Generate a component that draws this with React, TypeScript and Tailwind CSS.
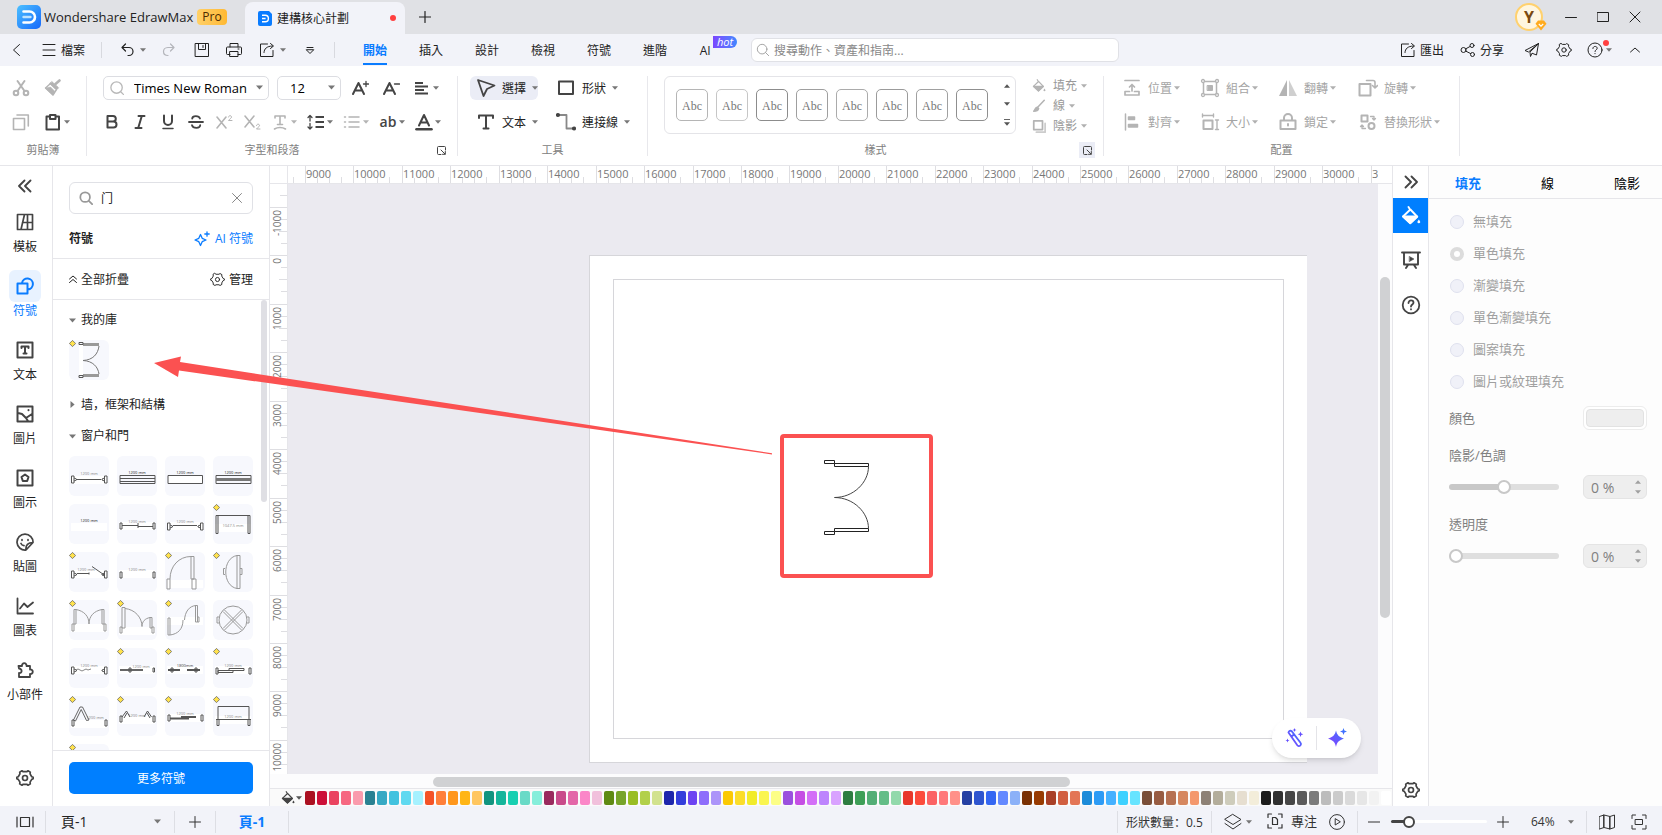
import React from "react";

type IconProps = { children: React.ReactNode; size?: string; box?: string; className?: string; sw?: number };

const Icon = ({ children, size = "size-4", box = "0 0 16 16", className = "", sw = 1 }: IconProps) => (
  <svg
    aria-hidden="true"
    viewBox={box}
    fill="none"
    stroke="currentColor"
    strokeWidth={sw}
    strokeLinecap="round"
    strokeLinejoin="round"
    className={`${size} shrink-0 ${className}`}
  >
    {children}
  </svg>
);

const Caret = ({ className = "text-[#777]", size = "h-1 w-1.5" }: { className?: string; size?: string }) => (
  <svg aria-hidden="true" viewBox="0 0 6 4" className={`${size} shrink-0 ${className}`}>
    <path d="M0 .3h6L3 3.800z" fill="currentColor" />
  </svg>
);

const GearPath = () => (
  <>
    <path d="M5.3 1.600 6.400 2.400h3.200l1.100-.8 2 1.200-.2 1.500 1.500 2.600 1.300.4v1.400l-1.300.5-1.500 2.500.2 1.500-2 1.200-1.100-.8H6.400l-1.100.8-2-1.200.2-1.500L2 9.200.7 8.700V7.300L2 6.900l1.500-2.600-.2-1.500z" />
    <circle cx="8" cy="8" r="2.200" />
  </>
);

const Bucket = () => (
  <>
    <path d="M6 .8l1.500 2.400M7.500 2.800 1.600 8.400l5.800 5.400 5.600-5.200z" />
    <path d="M1.800 8.400h11L7.400 13.600z" fill="currentColor" />
    <path d="M14.300 10.800c.8 1.200 1.100 1.700 1.100 2.200a1.200 1.200 0 0 1-2.300 0c0-.5.3-1 1.200-2.200z" fill="currentColor" stroke="none" />
  </>
);

const Logo = ({ className }: { className: string }) => (
  <svg aria-hidden="true" viewBox="0 0 24 24" className={`shrink-0 ${className}`}>
    <defs>
      <linearGradient id="logo-fill" x1="0" y1="0" x2="1" y2="1">
        <stop offset="0" stopColor="#4cc0ff" />
        <stop offset="1" stopColor="#1668fb" />
      </linearGradient>
    </defs>
    <rect width="24" height="24" rx="5" fill="url(#logo-fill)" />
    <path d="M6.500 6.500h6a5.500 5.500 0 0 1 0 11h-6" fill="none" stroke="#fff" strokeWidth="2.600" strokeLinecap="round" />
    <path d="M6.500 12h7" stroke="#bfe4ff" strokeWidth="2.400" strokeLinecap="round" />
  </svg>
);

function TitleBar() {
  return (
    <header className="flex h-[34px] shrink-0 items-center bg-[#e0e1e5] pl-[17px]">
      <Logo className="size-6" />
      <span className="ml-[3px] w-[150px] whitespace-nowrap pt-px text-[13px] text-[#222]">Wondershare EdrawMax</span>
      <span className="ml-[3px] flex h-4 w-[30px] items-center justify-center rounded-sm bg-gradient-to-r from-[#ffd066] to-[#ffb931] text-xs text-[#4b2a00]">
        Pro
      </span>
      <div className="ml-[18px] flex h-8 w-40 items-center self-end rounded-t-lg bg-[#f2f3f9] pl-[13px] pr-[9px]">
        <svg aria-hidden="true" viewBox="0 0 14 15" className="h-[15px] w-[14px]">
          <path d="M2 0h9l3 3v10a2 2 0 0 1-2 2H2a2 2 0 0 1-2-2V2a2 2 0 0 1 2-2z" fill="#0a7cff" />
          <path d="M4 4.300h3.200a3.200 3.200 0 0 1 0 6.400H4M4 7.500h3.600" fill="none" stroke="#fff" strokeWidth="1.400" />
        </svg>
        <span className="ml-[5px] pt-px text-xs text-[#222]">建構核心計劃</span>
        <span className="ml-auto size-1.5 rounded-full bg-[#ff4040]" />
      </div>
      <button aria-label="新增標籤" className="ml-[14px] text-[#222]">
        <Icon size="size-3" box="0 0 12 12" sw={1.2}><path d="M6 .5v11M.5 6h11" /></Icon>
      </button>
      <div className="ml-auto flex items-center pr-[21px] text-[#222]">
        <div className="relative flex size-7 items-center justify-center rounded-full border-2 border-[#ffd16e] bg-[#fff6df] text-base font-bold text-[#7a4a10]">
          Y
          <svg aria-hidden="true" viewBox="0 0 12 11" className="absolute -right-1.5 -bottom-0.5 h-[11px] w-3">
            <path d="M3 .5h6l2.500 3.200L6 10.500.5 3.700z" fill="#ffab1f" />
            <path d="m3.800 4 2.200 2.200L8.200 4" fill="none" stroke="#fff" strokeWidth="1.200" />
          </svg>
        </div>
        <button aria-label="最小化" className="ml-[22px]"><Icon size="size-3" box="0 0 12 12"><path d="M.5 6.500h11" /></Icon></button>
        <button aria-label="最大化" className="ml-5"><Icon size="size-3" box="0 0 12 12"><path d="M.5 1.500h11v9H.5z" /></Icon></button>
        <button aria-label="關閉" className="ml-5"><Icon size="size-3" box="0 0 12 12"><path d="m1 1 10 10M11 1 1 11" /></Icon></button>
      </div>
    </header>
  );
}

const ExportIcon = () => (
  <Icon><path d="M8.500 2H1.500v12.500h12.500V8.500M5 10.500c.3-3.800 2.500-6.300 8.500-6.500M11.500 1.500 14.500 4l-3 2.500" /></Icon>
);

function MenuBar() {
  return (
    <nav className="flex h-8 shrink-0 items-center bg-[#f2f3f9] text-xs text-[#222]">
      <button aria-label="返回" className="flex w-[34px] justify-center">
        <Icon size="size-3" box="0 0 12 12"><path d="M8.500.5 2.500 6l6 5.500" /></Icon>
      </button>
      <button className="ml-2 flex items-center gap-[5px]">
        <Icon size="size-[14px]" box="0 0 14 14"><path d="M1 1.500h12M1 7h12M1 12.500h12" /></Icon>
        <span className="pt-0.5">檔案</span>
      </button>
      <span className="ml-4 h-4 w-px bg-[#d8d9df]" />
      <button aria-label="復原" className="ml-[17px] flex items-center gap-[5px]">
        <Icon sw={1.200}><path d="M6.500 2 3 5.500 6.500 9M3.200 5.500H10a4 4 0 0 1 0 8H9" /></Icon>
        <Caret />
      </button>
      <button aria-label="重做" className="ml-[15px] text-[#b4b5bb]">
        <Icon sw={1.200}><path d="M9.500 2 13 5.500 9.500 9M12.800 5.500H7C3.500 5.500 2.500 8 2.500 9.500s1 4 4.500 4" /></Icon>
      </button>
      <button aria-label="儲存" className="ml-[17px]">
        <Icon><path d="M1.500 1.500h13v13h-13zM4.500 1.500v6h7v-6M9 3.500v2" /></Icon>
      </button>
      <button aria-label="列印" className="ml-4">
        <Icon><path d="M4 5V1.500h8V5M4 12.500H1.500a1 1 0 0 1-1-1V6a1 1 0 0 1 1-1h13a1 1 0 0 1 1 1v5.500a1 1 0 0 1-1 1H12M4 9.500h8v5H4zM12 7h1" /></Icon>
      </button>
      <button aria-label="匯出檔案" className="ml-[17px] flex items-center gap-[5px]"><ExportIcon /><Caret /></button>
      <button aria-label="更多" className="ml-[19px]">
        <Icon size="size-[10px]" box="0 0 10 10"><path d="M2 2.500h6M1.500 5 5 8.500 8.500 5z" /></Icon>
      </button>
      <span className="ml-[19px] h-4 w-px bg-[#d8d9df]" />
      <div className="ml-7 flex h-full items-center gap-8 whitespace-nowrap pt-0.5">
        <button className="relative h-full font-bold text-[#0a7cff]">
          開始<span className="absolute inset-x-0 bottom-px h-0.5 bg-[#0a7cff]" />
        </button>
        {["插入", "設計", "檢視", "符號", "進階"].map((t) => <button key={t}>{t}</button>)}
        <button className="relative w-3">
          AI
          <span className="absolute -top-[7px] left-[14px] flex h-3 w-6 items-center justify-center rounded-r-full rounded-tl-md bg-gradient-to-r from-[#7a45ff] to-[#3d86ff] text-[11px] italic text-white">hot</span>
        </button>
      </div>
      <label className="ml-10 flex h-6 max-w-[368px] flex-1 items-center gap-1 rounded-md border border-[#e0e1e6] bg-white px-1">
        <Icon size="size-[14px]" className="text-[#999]"><circle cx="7" cy="7" r="5.500" /><path d="m11 11 3.500 3.500" /></Icon>
        <input aria-label="搜尋" placeholder="搜尋動作、資產和指南..." className="w-full bg-transparent pt-0.5 text-xs outline-none placeholder:text-[#888]" />
      </label>
      <div className="ml-auto flex items-center pr-[22px]">
        <button className="flex items-center gap-1"><ExportIcon /><span className="pt-0.5">匯出</span></button>
        <button className="ml-4 flex items-center gap-1">
          <Icon><circle cx="3.500" cy="8" r="2.500" /><circle cx="12" cy="3.500" r="2" /><circle cx="12.500" cy="12.500" r="2" /><path d="M5.800 6.800 10.200 4.400M5.900 9.200l4.800 2.400" /></Icon>
          <span className="pt-0.5">分享</span>
        </button>
        <button aria-label="傳送" className="ml-5">
          <Icon><path d="M14.500 1.500 1 8.500l3.500 1.500L14.500 1.500 12.500 13 8 11.200 6.500 14.500 6 10.500z" /></Icon>
        </button>
        <button aria-label="設定" className="ml-4"><Icon><GearPath /></Icon></button>
        <button aria-label="說明" className="relative ml-[15px] flex items-center gap-[3px]">
          <Icon><circle cx="8" cy="8" r="7" /><path d="M5.900 6.500c0-3 4.300-2.600 4.300-.2C10.200 7.800 8 7.700 8 9.500M8 11.500v.2" /></Icon>
          <Caret />
          <span className="absolute -top-0.5 left-4 size-1.5 rounded-full bg-[#ff4040]" />
        </button>
        <button aria-label="收合" className="ml-[18px]">
          <Icon size="size-[10px]" box="0 0 10 10"><path d="m.5 7 4.500-4L9.500 7" /></Icon>
        </button>
      </div>
    </nav>
  );
}

const Group = ({ title, width, launcher, children }: { title: string; width: string; launcher?: string; children: React.ReactNode }) => (
  <>
    <section aria-label={title} className={`${width} shrink-0`}>
      <div className="h-[58px]">{children}</div>
      <div className="relative mt-2 flex h-4 items-center justify-center text-[11px] text-[#808080]">
        {title}
        {launcher && (
          <button aria-label={`${title}選項`} className={`absolute right-2 top-0 flex size-4 items-center justify-center text-[#444] ${launcher}`}>
            <Icon size="size-[9px]" box="0 0 9 9"><path d="M4 8.500H1.500a1 1 0 0 1-1-1v-6a1 1 0 0 1 1-1h6a1 1 0 0 1 1 1V4M4 4l4 4M8.300 5.500v2.800H5.500" /></Icon>
          </button>
        )}
      </div>
    </section>
    <span className="h-20 w-px shrink-0 bg-[#e8e8ec]" />
  </>
);

const ToolButton = ({ icon, label, active = false }: { icon: React.ReactNode; label: string; active?: boolean }) => (
  <button className={`flex h-6 items-center whitespace-nowrap rounded-md text-xs text-[#222] ${active ? "bg-[#ebedf6]" : ""}`}>
    <span className="flex w-8 justify-center text-[#444]">{icon}</span>
    <span className="pt-0.5">{label}</span>
    <Caret className="ml-1.5 text-[#777]" />
  </button>
);

const ArrangeButton = ({ icon, label }: { icon: React.ReactNode; label: string }) => (
  <button className="flex h-6 items-center gap-1.5 whitespace-nowrap text-xs">
    <Icon size="size-5" box="0 0 20 20" sw={2} className="text-[#b4b4b4]">{icon}</Icon>
    <span className="flex items-center gap-0.5"><span className="pt-0.5">{label}</span><Caret className="text-[#b0b0b0]" /></span>
  </button>
);

const Cell = ({ label, caret, children, muted }: { label: string; caret?: boolean; muted?: boolean; children: React.ReactNode }) => (
  <button aria-label={label} className={`flex h-6 items-center justify-between ${caret ? "w-[26px]" : "w-[18px]"} ${muted ? "text-[#b4b4b4]" : "text-[#444]"}`}>
    <Icon size="size-[18px]" box="0 0 18 18" sw={2}>{children}</Icon>
    {caret && <Caret className={muted ? "text-[#b4b4b4]" : "text-[#777]"} />}
  </button>
);

const GlyphA = () => <path d="M2 15 7.500 4l5.500 11M4 11.500h7" />;

function Ribbon() {
  return (
    <div className="flex shrink-0 overflow-hidden border-b border-[#e6e6ea] bg-white pt-[10px] pb-[7px] text-[#333]">
      <Group title="剪貼簿" width="w-[86px]">
        <div className="grid grid-cols-[32px_auto] gap-y-[10px] pl-3">
          <Cell label="剪下" muted><circle cx="4" cy="14" r="2.300" /><circle cx="14" cy="14" r="2.300" /><path d="m5.500 12 7-10M12.500 12l-7-10" /></Cell>
          <Cell label="複製格式" muted><path d="M11.500 5 15.500 1.500" strokeWidth="2.600" /><path d="M8 2.800l6.500 6-2 2-6.500-6z" fill="currentColor" strokeWidth="1" /><path d="M6.500 4.500l6 6L9 16 1.500 9z" strokeWidth="1.400" /><path d="M1.500 9l5-1 4.500 4.500L9 16z" fill="currentColor" strokeWidth="0.500" /></Cell>
          <Cell label="複製" muted><path d="M1.500 5.500h11v11h-11z" strokeWidth="1.600" /><path d="M5 2h11.300v11" strokeWidth="1.600" /></Cell>
          <Cell label="貼上" caret><path d="M5.500 3.500H2.500v13h12.500v-13h-3M6 2h5.500v4H6z" /></Cell>
        </div>
      </Group>

      <Group title="字型和段落" width="w-[370px]" launcher="bg-white">
        <div className="flex items-center pl-4">
          <label className="relative flex h-6 w-[166px] items-center rounded-[5px] border border-[#dcdde2] pl-1.5">
            <Icon size="size-[14px]" className="text-[#b8b8b8]" sw={1.500}><circle cx="7.500" cy="7.500" r="6.500" /><path d="m12.500 12.500 2.800 2.800" /></Icon>
            <select aria-label="字型" className="w-full appearance-none bg-transparent pl-[10px] pt-px text-[13px] text-black outline-none">
              <option>Times New Roman</option>
            </select>
            <span className="pointer-events-none absolute right-[5px] top-2 flex"><Caret size="h-[5px] w-[7px]" /></span>
          </label>
          <label className="relative ml-2 flex h-6 w-16 items-center rounded-[5px] border border-[#dcdde2]">
            <select aria-label="字型大小" className="w-full appearance-none bg-transparent pl-3 pt-px text-[13px] text-black outline-none">
              <option>12</option>
            </select>
            <span className="pointer-events-none absolute right-[5px] top-2 flex"><Caret size="h-[5px] w-[7px]" /></span>
          </label>
          <div className="ml-[10px] flex items-center gap-[13px]">
            <Cell label="放大字型"><GlyphA /><path d="M12.500 5h5M15 2.500v5" strokeWidth="1.300" /></Cell>
            <Cell label="縮小字型"><GlyphA /><path d="M12.500 5h5" strokeWidth="1.300" /></Cell>
            <Cell label="對齊文字" caret><path d="M2 4h8M2 7.500h13M2 11h9M2 14.500h13" strokeLinecap="butt" /></Cell>
          </div>
        </div>
        <div className="mt-[10px] flex items-center gap-[10px] pl-4">
          <Cell label="粗體"><path d="M4.500 3h5.500a2.800 2.800 0 0 1 0 5.600H4.500zM4.500 8.600h6a3 3 0 0 1 0 6h-6z" /></Cell>
          <Cell label="斜體"><path d="M7.500 3h6M4.500 15h6M10.800 3 7.200 15" /></Cell>
          <Cell label="底線"><path d="M5 2.500v5.500a4 4 0 0 0 8 0V2.500" /><path d="M4 15.500h10" strokeWidth="1.500" /></Cell>
          <Cell label="刪除線"><path d="M13 5.500C12 2.500 5.500 2.300 5.200 5.700M2 9h14M5 12.200c1 3.500 8 3.500 8.200 0" strokeWidth="1.800" /></Cell>
          <Cell label="上標" muted><path d="m2 4 9 11M11 4 2 15" strokeWidth="1.600" /><path d="M13.500 4c.2-2 3.200-1.700 3 .2-.2 1.200-2 1.800-3 3.300h3.500" strokeWidth="1" /></Cell>
          <Cell label="下標" muted><path d="m2 3 9 11M11 3 2 14" strokeWidth="1.600" /><path d="M13.500 12.500c.2-2 3.200-1.700 3 .2-.2 1.200-2 1.800-3 3.300H17" strokeWidth="1" /></Cell>
          <Cell label="文字效果" caret muted><path d="M4 5V3h10v2M9 3v8.500M6.500 11.500h5M3.500 16c3-2 8-2 11 0" strokeWidth="1.600" /></Cell>
          <Cell label="行距" caret><path d="M8.500 4H17M8.500 9H17M8.500 14H17" strokeLinecap="butt" /><path d="M3 3v5M3 10.500v5M1 4.500l2-2 2 2M1 14l2 2 2-2" strokeWidth="1.300" /></Cell>
          <Cell label="清單" caret muted><path d="M6 4h10M6 9h10M6 14h10M1.500 4h1M1.500 9h1M1.500 14h1" strokeWidth="1.500" /></Cell>
          <button aria-label="文字大小寫" className="flex h-6 w-[26px] items-center justify-between text-[#444]">
            <span className="w-[18px] text-sm font-semibold">ab</span><Caret />
          </button>
          <Cell label="字型顏色" caret><path d="M4 12.500 9 2l5 10.500M6 9.500h6" /><path d="M1.500 16.300h15" strokeWidth="2.600" /></Cell>
        </div>
      </Group>

      <Group title="工具" width="w-[189px]">
        <div className="grid grid-cols-[80px_auto] justify-items-start gap-y-[10px] pl-3">
          <ToolButton active label="選擇" icon={<Icon size="size-5" box="0 0 20 20" sw={1.800}><path d="M2 2 18.500 7.500l-7.500 3.500-3.500 7z" /></Icon>} />
          <ToolButton label="形狀" icon={<Icon size="size-4" sw={2}><path d="M1 1.500h14v12.500H1z" /></Icon>} />
          <ToolButton label="文本" icon={<Icon size="size-4" sw={2}><path d="M1 4V1.500h14V4M8 1.500v13M5.500 14.500h5" /></Icon>} />
          <ToolButton label="連接線" icon={<Icon size="size-5" box="0 0 20 20" sw={1.800}><path d="M4 3h6.500v13.500H17" stroke="#888" /><circle cx="2" cy="3" r="1.200" fill="currentColor" /><circle cx="18" cy="16.500" r="1.200" fill="currentColor" /></Icon>} />
        </div>
      </Group>

      <Group title="樣式" width="w-[455px]" launcher="bg-[#ebedf6]">
        <div className="flex pl-4">
          <div className="flex h-[58px] w-[352px] items-center rounded-md border border-[#e4e4e8] pl-[11px]">
            <div className="flex gap-2">
              {["#b5b5b5", "#c6c6c6", "#8c8c8c", "#9f9f9f", "#ababab", "#9b9b9b", "#a0a0a0", "#8f8f8f"].map((c) => (
                <button key={c} style={{ borderColor: c }} className="size-8 rounded-[5px] border bg-white pt-0.5 font-['Liberation_Serif',serif] text-xs text-[#777]">
                  Abc
                </button>
              ))}
            </div>
            <div className="ml-4 flex h-full flex-col items-center justify-between py-[7px] text-[#666]">
              <button aria-label="上一列" className="flex rotate-180"><Caret className="text-[#555]" /></button>
              <button aria-label="下一列" className="flex"><Caret className="text-[#555]" /></button>
              <button aria-label="展開" className="flex border-t border-[#666] pt-0.5"><Caret className="text-[#555]" /></button>
            </div>
          </div>
          <div className="ml-4 flex flex-col text-xs text-[#999]">
            {[
              ["填充", <Bucket key="f" />],
              ["線", <path key="l" d="M14 1.500 6.500 9.500M6 9.500c-2 0-2 2-4 4.500 3 0 5-1 5.500-3z" fill="currentColor" strokeWidth="1.800" />],
              ["陰影", <React.Fragment key="s"><path d="M5 15h10V5" stroke="#ccc" strokeWidth="2" /><path d="M2 2h10v10H2z" strokeWidth="2" /></React.Fragment>],
            ].map(([label, icon]) => (
              <button key={label as string} className="flex h-5 items-center">
                <span className="flex w-[21px]"><Icon size="size-[14px]" className="text-[#b4b4b4]" sw={1.4}>{icon}</Icon></span>
                {label}
                <Caret className="ml-1 text-[#b0b0b0]" />
              </button>
            ))}
          </div>
        </div>
      </Group>

      <Group title="配置" width="w-[355px]">
        <div className="grid grid-cols-[78px_78px_80px_auto] gap-y-[10px] pl-[18px] text-[#a4a4a4]">
          <ArrangeButton label="位置" icon={<path d="M3 2.500h14M3 17v-3.500h4.500M12.500 13.500H17V17H3M10 13V6.500M7.500 9 10 6.500 12.500 9" strokeWidth="1.700" />} />
          <ArrangeButton label="組合" icon={<><path d="M3.500 3.500h13v13h-13z" strokeWidth="1.500" /><path d="M7.500 7.500h5v5h-5z" fill="currentColor" strokeWidth="1" /><circle cx="3" cy="3" r="1.500" fill="#fff" strokeWidth="1.300" /><circle cx="17" cy="3" r="1.500" fill="#fff" strokeWidth="1.300" /><circle cx="3" cy="17" r="1.500" fill="#fff" strokeWidth="1.300" /><circle cx="17" cy="17" r="1.500" fill="#fff" strokeWidth="1.300" /></>} />
          <ArrangeButton label="翻轉" icon={<><path d="M9 2V18H1z" fill="currentColor" stroke="none" /><path d="M11 2V18h8z" fill="#cfcfcf" stroke="none" /></>} />
          <ArrangeButton label="旋轉" icon={<><path d="M1.500 6h11v11.500h-11z" /><path d="M8.500 2.500h6.500a2 2 0 0 1 2 2V9M14.500 7.500 17 10l2.500-2.500" strokeWidth="1.600" /></>} />
          <ArrangeButton label="對齊" icon={<><path d="M3.500 2v16" strokeWidth="1.500" /><path d="M6.500 5h6v2.500h-6zM6.500 12.500h9V15h-9z" fill="currentColor" strokeWidth="1.500" /></>} />
          <ArrangeButton label="大小" icon={<><path d="M3.500 8.500h9V17h-9z" /><path d="M2.500 3.500h11M2.500 2v3M13.500 2v3M17 8v9.500M15.500 8h3M15.500 17.500h3" strokeWidth="1.400" /></>} />
          <ArrangeButton label="鎖定" icon={<><path d="M2.500 8.500h15V17h-15zM6 8V6a4 4 0 0 1 8 0v2" /><path d="M10 12v1.500" /></>} />
          <ArrangeButton label="替換形狀" icon={<><path d="M3.500 3.500h6v6h-6z" /><circle cx="13.500" cy="14" r="3" /><path d="M12.500 4.500H16V8M14.500 6.500 16 8l1.500-1.500M7.500 16.500H4V13M2.500 14.500 4 13l1.500 1.500" strokeWidth="1.300" /></>} />
        </div>
      </Group>
    </div>
  );
}

const NAV: { label: string; icon: React.ReactNode; active?: boolean }[] = [
  { label: "模板", icon: <path d="M1.500 1.500h15v15h-15zM8.500 1.500 5 16.500M11.500 1.500v15M6.500 9.500H16" strokeWidth="1.700" /> },
  { label: "符號", active: true, icon: <path d="M1.500 6.500h10v10h-10zM6 6a5.500 5.500 0 1 1 5.800 6.500" /> },
  { label: "文本", icon: <path d="M1.500 1.500h15v15h-15zM5.500 7V5.500h7V7M9 5.500v7M7.500 12.500h3" /> },
  { label: "圖片", icon: <path d="M1.500 1.500h15v15h-15zM2 8l4 1 4 4 6-4M10 13l2 3M12.500 5v.2" /> },
  { label: "圖示", icon: <path d="M1.500 1.500h15v15h-15zM9 5.500 12.500 8l-1.300 4H6.800L5.500 8z" /> },
  { label: "貼圖", icon: <path d="M10 17A8 8 0 1 1 17 9.500M17 9.500 10 17c-.5-5 2-7.500 7-7.500zM6 6.500v.8M12 6.500v.8M5 10.500c.6 1.500 1.500 2 3 2.200" strokeWidth="1.700" /> },
  { label: "圖表", icon: <path d="M1.500 1.500v15H17M4 11.500l4-5 3.500 3.500L17 5.500" strokeWidth="1.800" /> },
  { label: "小部件", icon: <path d="M2.500 5H6a2.300 2.300 0 1 1 4.500 0H14v3.500a2.300 2.300 0 1 1 0 4.500v3H3v-4c3.500.5 3.500-4.500 0-4.500z" strokeWidth="1.800" /> },
];

function NavRail() {
  return (
    <aside className="flex w-[53px] shrink-0 flex-col items-center border-r border-[#e6e6ea] bg-white pr-0.5 text-[#444]">
      <button aria-label="收合面板" className="mt-[13px] mb-[13px]">
        <Icon size="size-[14px]" box="0 0 14 14" sw={1.800}><path d="M6.500 1.500 1 7l5.500 5.500M12.500 1.500 7 7l5.500 5.500" /></Icon>
      </button>
      {NAV.map((n) => (
        <button key={n.label} className={`mb-2 flex h-14 flex-col items-center ${n.active ? "text-[#0a7cff]" : ""}`}>
          <span className={`flex size-8 items-center justify-center rounded-md ${n.active ? "bg-[#e8f2ff]" : ""}`}>
            <Icon size="size-[18px]" box="0 0 18 18" sw={2}>{n.icon}</Icon>
          </span>
          <span className={`mt-px text-xs ${n.active ? "" : "text-[#222]"}`}>{n.label}</span>
        </button>
      ))}
      <button aria-label="設定" className="mt-auto mb-[19px]"><Icon size="size-[18px]" sw={1.500}><GearPath /></Icon></button>
    </aside>
  );
}

const Label = ({ y, x = 20, text = "1200 mm", fill = "#888" }: { y: number; x?: number; text?: string; fill?: string }) => (
  <text x={x} y={y} fontSize="4" fill={fill} stroke="none" textAnchor="middle">{text}</text>
);
const Strip = ({ y }: { y: number }) => <rect x="2" y={y} width="36" height="8" fill="#fff" stroke="none" />;
const Ends = ({ y }: { y: number }) => (
  <path d={`M2.500 ${y - 3.5}h2.500v7H2.500zM5 ${y - 1.5}l2.500 1v1L5 ${y + 1.5}M35.500 ${y - 3.5}H38v7h-2.500zM35.500 ${y - 1.5}l-2.500 1v1l2.500 1`} />
);
const Feet = ({ y }: { y: number }) => <path d={`M3 ${y}h2v6H3zM36 ${y}h2v6h-2z`} />;

const SYMBOLS: { name: string; marked?: boolean; soft?: boolean; art: React.ReactNode }[] = [
  { name: "窗", art: <><Strip y={20} /><Label y={19} /><Ends y={23.5} /><path d="M8 23.500h24" /></> },
  { name: "雙層窗", art: <><Label y={18} fill="#222" /><path d="M3 19.500h35v8H3zM3 22.500h35M3 25.500h35" /></> },
  { name: "開口", art: <><Label y={18} fill="#222" /><path d="M3 19.500h34.500v8H3z" fill="#fff" /></> },
  { name: "滑窗", art: <><Label y={18} fill="#222" /><path d="M3 19.500h35v8H3z" /><path d="M3 23.500h35" strokeWidth="3" stroke="#777" /></> },
  { name: "牆洞", art: <><Strip y={19} /><Label y={18} fill="#222" /></> },
  { name: "推窗", art: <><Strip y={18} /><Label y={19} /><Feet y={19} /><path d="M5 21.500h16M21 22.500h15M21 19v5" /></> },
  { name: "平窗", art: <><Strip y={18} /><Label y={19} /><Ends y={22.5} /><path d="M8 21.500h24" /></> },
  { name: "凸窗", marked: true, art: <><Strip y={20} /><path d="M3 11.500h34M3 11.500v18h2v-18M35 11.500v18h2v-18" /><Label y={23} text="1047.5 mm" /></> },
  { name: "開啟窗", marked: true, art: <><Strip y={18} /><Label y={19} x={17} /><Ends y={22.5} /><path d="M8 21.500h12M20 20.500v2M23 14.500l13 9" /></> },
  { name: "門洞", art: <><Strip y={18} /><Label y={19} /><Feet y={20} /></> },
  { name: "單門", marked: true, soft: true, art: <><Strip y={28} /><path d="M5 27C5 14 14 4.500 26 4.500M26 4.500h3V27h-3zM2 27h3v10H2zM27 27h4v10h-4z" /></> },
  { name: "半圓門", marked: true, soft: true, art: <path d="M24 3.500h3v33h-3zM24 3.500C9 6 9 34 24 36.500M12 16.500h-1.500v6H12M27 16.500h2v6h-2" /> },
  { name: "雙門", marked: true, soft: true, art: <><Strip y={24} /><path d="M7 9.500C15 11 20 16 20 24 20 16 25 11 33 9.500M5 9.500h2V24H5zM33 9.500h2V24h-2zM3 24h2v7H3zM35 24h2v7h-2z" /></> },
  { name: "子母門", marked: true, soft: true, art: <><Strip y={27} /><path d="M8 8.500c10 1 17 9 17 18 0-5 3-8 8-9M5 7.500h3V28H5zM33 17.500h2V28h-2zM3 27h2v6H3zM35 27h2v6h-2z" /></> },
  { name: "雙向門", marked: true, soft: true, art: <><Strip y={17} /><path d="M31 5.500C24 6 20 12 19.500 20M18 20C18 29 13 34 5 35M30.500 5.500h2V22h-2zM3 18h2v17H3zM32.500 17h1.500v5h-1.500z" /></> },
  { name: "旋轉門", soft: true, art: <path d="M20 6a14 14 0 1 1 0 28 14 14 0 0 1 0-28zM10 11.500 28.500 30M11.500 10 30 28.500M30 11.500 11.500 30M28.500 10 10 28.500M6 17H4v6h2M34 17h2v6h-2" /> },
  { name: "折疊門", art: <><Strip y={18} /><Label y={19} /><Ends y={22.5} /><path d="M7 22q2-2 4 0t4 0 4 0l3-1" stroke="#888" /></> },
  { name: "滑門", marked: true, art: <><Strip y={18} /><Label y={20} x={24} /><path d="M3 22h23" strokeWidth="1.800" /><path d="M12 20h2v4h-2zM36 20h1.500v4H36z" /></> },
  { name: "雙滑門", marked: true, art: <><Strip y={18} /><Label y={19} text="1800mm" fill="#444" /><path d="M3 22h12M22 22h13" strokeWidth="1.800" /><path d="M6 20h2v4H6zM30 20h2v4h-2z" /></> },
  { name: "移門", marked: true, art: <><Strip y={18} /><Label y={19} /><Feet y={20} /><path d="M5 22.500h15v2H5zM16 20.500h15v2H16z" /></> },
  { name: "折門", marked: true, art: <><Strip y={24} /><Label y={23} x={26} /><Feet y={24} /><path d="M4.500 24 11 11h2.500L20 24M6.500 25 12.200 13.500 17.500 24.500M4.500 24l2 1M17.500 24.500 20 24" strokeWidth="0.900" /></> },
  { name: "雙折門", marked: true, art: <><Strip y={20} /><Label y={21} /><Feet y={20} /><path d="M5 21 9.500 15 13 21M7 22l3-5M27 21l3.500-6 4 6M30 17l3 5" /></> },
  { name: "口袋門", marked: true, art: <><Strip y={18} /><Label y={19} /><Feet y={19} /><path d="M5 22.500h19M16 21h15" strokeWidth="1.800" /></> },
  { name: "捲門", marked: true, art: <><Strip y={20} /><path d="M5 10.500h31V23M5 10.500V23M3 23.500h35M4 23.500h2v6H4zM35 23.500h2v6h-2z" /><Label y={22} /></> },
];

const Marker = () => (
  <svg aria-hidden="true" viewBox="0 0 7 7" className="absolute left-0 top-0 size-[7px]">
    <path d="M3.500.4 6.600 3.500 3.500 6.600.4 3.500z" fill="#ffe24d" stroke="#555" strokeWidth=".7" />
  </svg>
);

function SymbolPanel() {
  return (
    <aside className="flex w-[217px] shrink-0 flex-col border-r border-[#e6e6ea] bg-white text-xs text-[#222]">
      <div className="border-b border-[#e6e6ea] px-4 pt-4">
        <label className="flex h-8 items-center rounded-md border border-[#e0e1e6] px-[9px]">
          <Icon size="size-[14px]" className="text-[#999]" sw={2}><circle cx="7" cy="7" r="5.500" /><path d="m11.200 11.200 3.800 3.800" /></Icon>
          <input aria-label="搜尋符號" defaultValue="门" className="ml-2 w-full bg-transparent pt-0.5 outline-none" />
          <button aria-label="清除" className="text-[#888]"><Icon size="size-3" box="0 0 12 12"><path d="m1.500 1.500 9 9M10.500 1.500l-9 9" /></Icon></button>
        </label>
        <div className="flex h-11 items-center justify-between pt-1.5">
          <h2 className="font-bold">符號</h2>
          <button className="flex items-center gap-[5px] text-[#0a7cff]">
            <Icon sw={1.300}><path d="M6.500 3.500 8.200 7.300 12 9l-3.800 1.700L6.500 14.500 4.800 10.700 1 9l3.800-1.700zM13 .8v4.400M10.800 3h4.400" /></Icon>
            AI 符號
          </button>
        </div>
      </div>
      <div className="flex h-[41px] shrink-0 items-center justify-between border-b border-[#e6e6ea] px-4">
        <button className="flex items-center gap-1">
          <Icon size="size-2" box="0 0 8 8"><path d="M.5 4 4 1l3.500 3M.5 7.500 4 4.500l3.500 3" /></Icon>
          <span className="pt-px">全部折疊</span>
        </button>
        <button className="flex items-center gap-1"><Icon size="size-[15px]"><GearPath /></Icon><span className="pt-px">管理</span></button>
      </div>
      <div className="relative min-h-0 flex-1 overflow-hidden pl-4">
        <button className="flex h-10 items-center gap-[5px]"><Caret size="h-[5px] w-[7px]" />我的庫</button>
        <button aria-label="雙開門" className="relative block size-10 rounded-md bg-[#f7f8fd]">
          <svg aria-hidden="true" viewBox="0 0 40 40" fill="none" stroke="#777" className="size-10">
            <path d="M10 5h4v30h-4z" fill="#fff" stroke="none" />
            <path d="M14 4.500h16" strokeWidth="3" stroke="#999" /><path d="M14 35.500h16" strokeWidth="3" stroke="#999" />
            <path d="M10 2.500h4v2h-4zM10 35.500h4v2h-4z" stroke="#555" />
            <path d="M30 6C29 14 24 20 14 20.500 24 21 29 27 30 34" />
          </svg>
          <Marker />
        </button>
        <button className="mt-2 flex h-8 items-center gap-[5px] font-['Noto_Sans_CJK_SC',sans-serif]" lang="zh-CN">
          <span className="flex -rotate-90"><Caret size="h-[5px] w-[7px]" /></span>墙，框架和結構
        </button>
        <button className="flex h-8 items-center gap-[5px]"><Caret size="h-[5px] w-[7px]" />窗户和門</button>
        <div className="mt-1 grid grid-cols-[repeat(4,40px)] gap-2">
          {SYMBOLS.map((s) => (
            <button key={s.name} aria-label={s.name} className="relative size-10 rounded-md bg-[#f7f8fd]">
              <svg aria-hidden="true" viewBox="0 0 40 40" fill="none" stroke={s.soft ? "#999" : "#555"} strokeWidth="1" className="size-10">{s.art}</svg>
              {s.marked && <Marker />}
            </button>
          ))}
          <button aria-label="牆角" className="relative size-10 rounded-md bg-[#f7f8fd]"><Marker /></button>
        </div>
        <span className="absolute right-0.5 top-0 h-[202px] w-1.5 rounded-full bg-[#dfdfe4]" />
      </div>
      <div className="shrink-0 border-t border-[#e6e6ea] px-4 pt-[11px] pb-3">
        <button className="h-8 w-full rounded-[5px] bg-[#007fff] pt-0.5 text-white">更多符號</button>
      </div>
    </aside>
  );
}

const STEP = 48.44;
const H_MAJORS = Array.from({ length: 23 }, (_, i) => i);
const V_MAJORS = Array.from({ length: 12 }, (_, i) => i);

function HorizontalRuler() {
  return (
    <svg role="img" aria-label="水平標尺" className="h-[17px] min-w-0 flex-1 text-[11px]" stroke="#dedee2" shapeRendering="crispEdges">
      <path d="M5.500 11v6" />
      {H_MAJORS.map((i) => {
        const x = Math.round(17 + i * STEP);
        return (
          <g key={i}>
            <path d={`M${x}.5 0v17M${x + 12}.5 12v5M${x + 24}.5 12v5M${x + 36}.5 11v6`} />
            <text x={x + 1} y="12" fill="#777" stroke="none">{9000 + i * 1000}</text>
          </g>
        );
      })}
    </svg>
  );
}

function VerticalRuler() {
  return (
    <svg role="img" aria-label="垂直標尺" className="h-full w-[18px] shrink-0 border-r border-[#e6e6ea] bg-white text-[10px]" stroke="#dedee2" shapeRendering="crispEdges">
      <path d="M10 11.500h8" />
      {V_MAJORS.map((i) => {
        const y = Math.round(23 + i * STEP);
        return (
          <g key={i}>
            <path d={`M0 ${y}.5h18M11 ${y + 12}.5h7M9 ${y + 24}.5h9M11 ${y + 36}.5h7`} />
            <text transform={`translate(11 ${y + 3}) rotate(-90)`} textAnchor="end" fill="#777" stroke="none">{(i - 1) * 1000}</text>
          </g>
        );
      })}
    </svg>
  );
}

const SWATCHES =
  "ab1021 cc0f38 ea4360 f66781 fa9bad 2a8192 37a9c4 42c2df 60d9f0 a6f1ff f45226 ff7f3a ff961c ffb516 ffc660 12947f 15b59b 18cfb1 69dac7 86eedb 9a2a5e c94b8b e366a8 fb86c8 f1c0dc 5f8a13 77a42a 99bd23 b2d04a d2e28e 1e26ac 343edb 6d43f2 8e6dfb ac94f9 fbc904 fbdd2a f1eb2b faf550 fcfe86 9b50de c54ee4 d36ff7 bd84fd d9a2ff 2e7d41 3e9f57 53ae76 64bd87 92d9ab e8382b fc4b3c fb6264 ff787a ff9089 2540a3 2f55cf 3567f2 6489ff 8cb1f8 7a3103 983b02 a94028 d15f41 e37556 1c8bd9 2d9bf5 45b1ff 3ed1ff 67e4ff 7a4e37 985c42 b67152 d6875f f4986d 8d8176 b3ad9b ceccbb e6ded0 f3edda 1c1c1c 303030 464646 5b5b5b 7b7b7b bcbcbc cbcbcb dadada e6e6e6 f2f2f2 ffffff".split(" ");

function CanvasArea() {
  return (
    <main className="flex min-w-0 flex-1 flex-col bg-[#fcfcfd]">
      <div className="flex h-[18px] shrink-0 border-b border-[#e6e6ea] bg-white">
        <span className="w-[18px] border-r border-[#e6e6ea]" />
        <HorizontalRuler />
        <span className="w-[14px]" />
      </div>
      <div className="flex min-h-0 flex-1">
        <VerticalRuler />
        <div className="relative min-w-0 flex-1 overflow-hidden bg-[#ebeaf0]">
          <div className="absolute left-[301px] top-[71px] h-[508px] w-[718px] border-t border-b border-l border-[#d6d6da] bg-white">
            <div className="absolute left-[23px] top-[23px] h-[460px] w-[671px] border border-[#d6d6da]" />
          </div>
          <div className="absolute left-[492px] top-[250px] flex h-36 w-[153px] rounded-sm border-4 border-[#fb5151]">
            <svg role="img" aria-label="雙開門" viewBox="784 438 145 136" fill="none" stroke="#222" className="size-full">
              <path d="M824.500 460.500h10v3h-10zM834.500 463.500h34v3h-34zM834.500 528.500h34v3h-34zM824.500 531.500h10v3h-10z" />
              <path d="M868.500 466.500c0 16-15 31-34 31 19 0 34 15 34 31" stroke="#444" />
            </svg>
          </div>
          <div className="absolute right-[17px] bottom-4 flex h-10 w-[89px] items-center justify-around rounded-full bg-white px-2 shadow-md">
            <svg className="absolute size-0" aria-hidden="true">
              <linearGradient id="ai-fill" x1="0" y1="1" x2="1" y2="0"><stop offset="0" stopColor="#8a3cff" /><stop offset="1" stopColor="#2f7dff" /></linearGradient>
            </svg>
            <button aria-label="魔術棒">
              <svg viewBox="0 0 20 20" className="size-5" fill="none" stroke="url(#ai-fill)" strokeWidth="1.800">
                <path d="M3.500 4.500a2 2 0 0 1 3.200-1.300l8.800 11.500a2 2 0 0 1-3.200 2.600zM6 9l3.500-3" />
                <path d="M9.500 0l.6 1.400 1.400.6-1.400.6-.6 1.400-.6-1.400L7.500 2l1.400-.6zM15.500 3.500l.8 2 2 .8-2 .8-.8 2-.8-2-2-.8 2-.8zM2.500 10.500l.6 1.400 1.400.6-1.400.6-.6 1.400-.6-1.400L.5 12.500l1.400-.6z" fill="#6450ff" stroke="none" />
              </svg>
            </button>
            <span className="h-6 w-px bg-[#e4e4e8]" />
            <button aria-label="AI 助手">
              <svg viewBox="0 0 20 20" className="size-5" fill="url(#ai-fill)">
                <path d="M8 2.500c1 4.500 3 6.500 8 8-5 1.800-7 3.500-8 8.500-1-5-3-6.700-8-8.500 5-1.500 7-3.500 8-8zM15.500 0l.9 2.600 2.600.9-2.600.9-.9 2.600-.9-2.600L12 3.500l2.600-.9z" />
              </svg>
            </button>
          </div>
        </div>
        <div className="w-[14px] shrink-0 pl-0.5 pt-[93px]"><div className="h-[341px] w-[10px] rounded-full bg-[#d0d1d3]" /></div>
      </div>
      <div className="h-[15px] shrink-0 border-b border-[#e6e6ea] pt-[3px] pl-[163px] pr-[322px]"><div className="h-[10px] rounded-full bg-[#d0d1d3]" /></div>
      <div className="flex h-[17px] shrink-0 items-center bg-[#fafafa] pl-[11px] text-[#444]">
        <button aria-label="填充顏色" className="flex w-6 items-center"><Icon size="size-[14px]" sw={1.400}><Bucket /></Icon><Caret className="ml-px text-[#555]" /></button>
        <div className="flex h-[14px] min-w-0 flex-1 gap-0.5 pr-px">
          {SWATCHES.map((c) => (
            <button key={c} aria-label={`#${c}`} style={{ backgroundColor: `#${c}` }} className="min-w-0 flex-1 rounded-xs" />
          ))}
        </div>
      </div>
    </main>
  );
}

function RightRail() {
  return (
    <aside className="flex w-[37px] shrink-0 flex-col items-center border-x border-[#e6e6ea] bg-white text-[#444]">
      <button aria-label="展開面板" className="flex h-8 items-center">
        <Icon size="size-[14px]" box="0 0 14 14" sw={1.800}><path d="M1.500 1.500 7 7l-5.500 5.500M7.500 1.500 13 7l-5.500 5.500" /></Icon>
      </button>
      <button aria-label="填充" className="flex h-[35px] w-full items-center justify-center bg-[#007fff] text-white">
        <Icon size="size-5" sw={1.500}><Bucket /></Icon>
      </button>
      <button aria-label="簡報" className="mt-[17px]">
        <Icon size="size-5" box="0 0 20 20" sw={1.900}><path d="M1 2.500h18M3 3v11.500h14V3M7 15l-2 3M13 15l2 3" /><path d="M8.500 6.500 13 9l-4.500 2.500z" fill="currentColor" strokeWidth="0.500" /></Icon>
      </button>
      <button aria-label="說明" className="mt-[25px]">
        <Icon size="size-5" box="0 0 20 20" sw={1.800}><circle cx="10" cy="10" r="8.300" /><path d="M7.500 8c0-3.500 5-3.200 5-.3 0 1.800-2.500 1.900-2.500 3.800M10 14.200v.2" /></Icon>
      </button>
      <button aria-label="設定" className="mt-auto mb-[7px]"><Icon size="size-[18px]" sw={1.500}><GearPath /></Icon></button>
    </aside>
  );
}

const RANGE =
  "h-1.5 w-[110px] appearance-none rounded-full outline-none [&::-webkit-slider-thumb]:size-[14px] [&::-webkit-slider-thumb]:appearance-none [&::-webkit-slider-thumb]:rounded-full [&::-webkit-slider-thumb]:border-2 [&::-webkit-slider-thumb]:border-[#c8c8c8] [&::-webkit-slider-thumb]:bg-white";

const SliderRow = ({ id, label, value, track }: { id: string; label: string; value: number; track: string }) => (
  <div>
    <label htmlFor={id} className="flex h-5 items-center">{label}</label>
    <div className="mt-[9px] flex h-6 items-center justify-between">
      <input id={id} type="range" min={0} max={100} defaultValue={value} className={`${RANGE} ${track}`} />
      <div className="flex h-6 w-16 items-center justify-between rounded-md border border-[#e4e4e4] bg-[#eeeeee] pr-[5px] pl-[7px]">
        <input aria-label={`${label}數值`} defaultValue="0 %" className="w-8 bg-transparent pt-px text-sm text-[#808080] outline-none" />
        <span className="flex flex-col gap-1.5">
          <button aria-label="增加" className="flex rotate-180"><Caret className="text-[#a0a0a0]" /></button>
          <button aria-label="減少" className="flex"><Caret className="text-[#a0a0a0]" /></button>
        </span>
      </div>
    </div>
  </div>
);

function FormatPanel() {
  return (
    <aside className="w-[233px] shrink-0 bg-[#fdfdfd] text-[13px] text-[#808080]">
      <div className="flex h-[33px] items-center justify-between border-b border-[#e6e6ea] pl-[26px] pr-[22px] pt-[3px] text-black">
        <button className="font-bold text-[#0a7cff]">填充</button>
        <button>線</button>
        <button>陰影</button>
      </div>
      <fieldset className="flex flex-col pt-[7px] pl-[21px] text-[#a0a0a0]">
        {["無填充", "單色填充", "漸變填充", "單色漸變填充", "圖案填充", "圖片或紋理填充"].map((t, i) => (
          <label key={t} className="flex h-8 items-center gap-[9px]">
            <input
              type="radio"
              name="fill"
              defaultChecked={i === 1}
              className="size-[14px] appearance-none rounded-full border border-[#dfe1ee] bg-[#f0f1f8] checked:border-4 checked:border-[#dcdcdc] checked:bg-white"
            />
            {t}
          </label>
        ))}
      </fieldset>
      <div className="flex flex-col pl-5 pr-[15px]">
        <div className="mt-2 flex h-6 items-center justify-between">
          <span className="pt-0.5">顏色</span>
          <button aria-label="顏色" className="h-6 w-16 rounded-md border border-[#ececec] bg-white p-0.5"><span className="block h-full rounded-sm border border-[#e2e2e2] bg-[#eeeeee]" /></button>
        </div>
        <div className="mt-4 flex flex-col gap-4">
          <SliderRow id="tint" label="陰影/色調" value={50} track="bg-[linear-gradient(to_right,#c8c8c8_50%,#dfdfdf_50%)]" />
          <SliderRow id="opacity" label="透明度" value={0} track="bg-[#dfdfdf]" />
        </div>
      </div>
    </aside>
  );
}

const Rule = ({ className = "" }: { className?: string }) => <span className={`h-[22px] w-px shrink-0 bg-[#dddee4] ${className}`} />;

function StatusBar() {
  return (
    <footer className="flex h-[29px] shrink-0 items-center bg-[#f2f3f9] pt-0.5 text-xs text-[#333]">
      <button aria-label="頁面面板" className="ml-4"><Icon size="size-[18px]" box="0 0 18 18" sw={1.200}><path d="M1 4v10M17 4v10M4.500 4.500h9v9h-9z" /></Icon></button>
      <Rule className="ml-[11px]" />
      <label className="relative flex h-full w-32 items-center">
        <select aria-label="頁面" className="w-full appearance-none bg-transparent pl-[15px] pt-px text-sm text-[#222] outline-none"><option>頁-1</option></select>
        <span className="pointer-events-none absolute right-[13px] top-[11px] flex"><Caret size="h-[5px] w-[7px]" /></span>
      </label>
      <Rule />
      <button aria-label="新增頁面" className="flex w-10 justify-center"><Icon size="size-3" box="0 0 12 12"><path d="M6 .5v11M.5 6h11" /></Icon></button>
      <Rule />
      <button className="w-[72px] pt-px text-sm font-bold text-[#0a7cff]">頁-1</button>
      <Rule />
      <div className="ml-auto flex items-center">
        <Rule />
        <span lang="zh-CN" className="ml-2 w-[85px] whitespace-nowrap pt-px font-['Noto_Sans_CJK_SC',sans-serif]">形狀數量：<span className="font-['Open_Sans',sans-serif]">0.5</span></span>
        <Rule />
        <button aria-label="圖層" className="ml-3 flex items-center gap-1">
          <Icon size="size-[18px]" box="0 0 18 18"><path d="M9 1.500 17 6.500l-8 5-8-5zM1 10.500l8 5.500 8-5.500" /></Icon><Caret />
        </button>
        <button className="ml-[15px] flex items-center gap-2 text-[13px]">
          <Icon sw={1.200}><path d="M1 4.500V1h3.500M11.500 1H15v3.500M15 11.500V15h-3.500M4.500 15H1v-3.500M5.500 4.500h3L10.500 6.500v5h-5z" /></Icon><span className="pt-px">專注</span>
        </button>
        <button aria-label="播放" className="ml-3"><Icon><circle cx="8" cy="8" r="7.400" /><path d="M6.200 5v6L11 8z" /></Icon></button>
        <Rule className="ml-3" />
        <button aria-label="縮小" className="ml-[10px]"><Icon size="size-3" box="0 0 12 12" sw={1.200}><path d="M.5 6h11" /></Icon></button>
        <input
          type="range"
          aria-label="縮放"
          min={0}
          max={100}
          defaultValue={14}
          className="ml-[11px] h-[3px] w-24 appearance-none rounded-full bg-[linear-gradient(to_right,#444_15%,#fff_15%)] outline-none [&::-webkit-slider-thumb]:size-3 [&::-webkit-slider-thumb]:appearance-none [&::-webkit-slider-thumb]:rounded-full [&::-webkit-slider-thumb]:border-2 [&::-webkit-slider-thumb]:border-[#444] [&::-webkit-slider-thumb]:bg-white"
        />
        <button aria-label="放大" className="ml-[10px]"><Icon size="size-3" box="0 0 12 12"><path d="M6 .5v11M.5 6h11" /></Icon></button>
        <button className="ml-[22px] flex items-center"><span className="w-[37px] text-left">64%</span><Caret /></button>
        <Rule className="ml-3" />
        <button aria-label="地圖" className="ml-3"><Icon><path d="M.5 2.500 5 1v12.500L.5 15zM5 1l6 1.500V15l-6-1.500zM11 2.500 15.500 1v12.500L11 15z" /></Icon></button>
        <button aria-label="符合視窗" className="ml-4 mr-[15px]"><Icon><path d="M1 4.500V1h3.500M11.500 1H15v3.500M15 11.500V15h-3.500M4.500 15H1v-3.500M4.500 5.500h7v5h-7z" /></Icon></button>
      </div>
    </footer>
  );
}

export default function App() {
  return (
    <div className="relative flex h-screen flex-col overflow-hidden bg-white font-['Open_Sans','Noto_Sans_CJK_TC',sans-serif] text-xs">
      <TitleBar />
      <MenuBar />
      <Ribbon />
      <div className="relative flex min-h-0 flex-1">
        <NavRail />
        <SymbolPanel />
        <CanvasArea />
        <RightRail />
        <FormatPanel />
        <svg aria-hidden="true" viewBox="0 0 618 102" className="pointer-events-none absolute left-[154px] top-[190px] h-[102px] w-[618px]">
          <path d="M0 7 27 .5 26 6 618 97.200v1.200L25 14.500 24 21z" fill="#fb5151" />
        </svg>
      </div>
      <StatusBar />
    </div>
  );
}
